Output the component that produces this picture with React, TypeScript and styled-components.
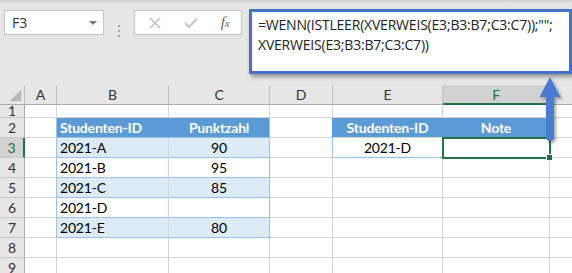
import React, { FunctionComponent } from "react";
import styled, { createGlobalStyle, css } from "styled-components";

const GlobalStyle = createGlobalStyle`
  html, body {
    margin: 0;
    padding: 0;
    background: #ffffff;
  }
`;

const GRID = "#d4d4d4";
const TABLE_LINE = "#9bc2e6";
const HEAD_BLUE = "#5b9bd5";
const BAND = "#ddebf7";
const GREEN = "#217346";
const CELL_FONT = `Lato, "Liberation Sans", sans-serif`;

type CellSpec = {
  text?: string;
  align?: "left" | "center";
  bg?: string;
  head?: boolean;
  right?: string;
  bottom?: string;
  selected?: boolean;
};

// G is only partly on screen, its letter lies past the window edge
const columns = ["A", "B", "C", "D", "E", "F", "G"];
const visibleLetters = ["A", "B", "C", "D", "E", "F"];
const rowNumbers = [1, 2, 3, 4, 5, 6, 7, 8, 9];

const students = [
  { id: "2021-A", score: "90" },
  { id: "2021-B", score: "95" },
  { id: "2021-C", score: "85" },
  { id: "2021-D", score: "" },
  { id: "2021-E", score: "80" }
];

// which cells carry content or table styling; every other cell is a plain grid cell
const buildCells = (): Record<string, CellSpec> => {
  const cells: Record<string, CellSpec> = {};
  cells.B2 = { text: "Studenten-ID", head: true, bg: HEAD_BLUE, right: HEAD_BLUE, bottom: TABLE_LINE };
  cells.C2 = { text: "Punktzahl", head: true, align: "center", bg: HEAD_BLUE, right: TABLE_LINE, bottom: TABLE_LINE };
  cells.A2 = { right: TABLE_LINE };
  students.forEach((s, i) => {
    const row = i + 3;
    const bg = i % 2 === 0 ? BAND : "#ffffff";
    cells[`A${row}`] = { right: TABLE_LINE };
    cells[`B${row}`] = { text: s.id, bg, right: "#c9dbee", bottom: TABLE_LINE };
    cells[`C${row}`] = { text: s.score, align: "center", bg, right: TABLE_LINE, bottom: TABLE_LINE };
  });
  cells.D2 = { right: HEAD_BLUE };
  cells.E2 = { text: "Studenten-ID", head: true, align: "center", bg: HEAD_BLUE, right: HEAD_BLUE };
  cells.F2 = { text: "Note", head: true, align: "center", bg: HEAD_BLUE, right: HEAD_BLUE };
  cells.D3 = { right: TABLE_LINE };
  cells.E3 = { text: "2021-D", align: "center", bottom: TABLE_LINE };
  cells.F3 = { selected: true };
  return cells;
};

const App: FunctionComponent = () => {
  const cells = buildCells();

  return (
    <Page>
      <GlobalStyle />
      <TopBar>
        <NameBox>
          <span>F3</span>
          <DropCaret />
        </NameBox>
        <Grip>
          <i />
          <i />
          <i />
        </Grip>
        <ButtonsBox>
          <ToolGlyph>
            <svg width="12" height="12" viewBox="0 0 12 12">
              <path d="M1 1 L11 11 M11 1 L1 11" stroke="#c4c4c4" strokeWidth="1.6" fill="none" />
            </svg>
          </ToolGlyph>
          <ToolGlyph>
            <svg width="14" height="12" viewBox="0 0 14 12">
              <path d="M1 6 L5 10 L13 1.5" stroke="#c4c4c4" strokeWidth="2" fill="none" />
            </svg>
          </ToolGlyph>
          <FxLabel>
            f<sub>x</sub>
          </FxLabel>
        </ButtonsBox>
        <FormulaBox>
          =WENN(ISTLEER(XVERWEIS(E3;B3:B7;C3:C7));"";
          <br />
          XVERWEIS(E3;B3:B7;C3:C7))
        </FormulaBox>
      </TopBar>

      <Sheet>
        <Corner />
        {columns.map((c) => (
          <ColHeader key={c} $active={c === "F"}>
            {visibleLetters.includes(c) ? c : null}
          </ColHeader>
        ))}
        {rowNumbers.map((r) => (
          <React.Fragment key={r}>
            <RowHeader $active={r === 3}>{r}</RowHeader>
            {columns.map((c) => {
              const spec = cells[`${c}${r}`] || {};
              return (
                <Cell
                  key={c}
                  $bg={spec.bg}
                  $head={spec.head}
                  $align={spec.align || "left"}
                  $right={spec.right}
                  $bottom={spec.bottom}
                  $selected={spec.selected}
                >
                  {spec.text}
                </Cell>
              );
            })}
          </React.Fragment>
        ))}
      </Sheet>

      <Arrow width="30" height="80" viewBox="0 0 30 80">
        <defs>
          <filter id="arrowShadow" x="-50%" y="-20%" width="200%" height="150%">
            <feDropShadow dx="2" dy="2" stdDeviation="1.5" floodColor="#000" floodOpacity="0.35" />
          </filter>
        </defs>
        <path
          d="M15 2 L25.5 22 L19 22 L19 62 Q19 66 15 66 Q11 66 11 62 L11 22 L4.5 22 Z"
          fill="#4a7bd0"
          filter="url(#arrowShadow)"
        />
      </Arrow>
    </Page>
  );
};

const Page = styled.div`
  position: relative;
  width: 572px;
  height: 273px;
  overflow: hidden;
  background: #ffffff;
`;

const TopBar = styled.div`
  height: 85px;
  box-sizing: border-box;
  display: flex;
  align-items: flex-start;
  padding: 9px 0 0 4px;
  background: linear-gradient(#cfcfcf 0px, #e6e6e6 4px, #e6e6e6 100%);
`;

const NameBox = styled.div`
  margin-top: 1px;
  width: 101px;
  height: 25px;
  box-sizing: border-box;
  border: 1px solid #c6c6c6;
  background: #ffffff;
  display: flex;
  align-items: center;
  justify-content: space-between;
  padding: 0 6px 0 7px;
  font-family: "Open Sans", "Liberation Sans", sans-serif;
  font-size: 14px;
  color: #333333;
`;

const DropCaret = styled.span`
  width: 0;
  height: 0;
  border-left: 4px solid transparent;
  border-right: 4px solid transparent;
  border-top: 4px solid #777777;
`;

const Grip = styled.div`
  width: 31px;
  margin-top: 16px;
  display: flex;
  flex-direction: column;
  align-items: center;
  gap: 3px;

  i {
    width: 2px;
    height: 2px;
    background: #a6a6a6;
  }
`;

const ButtonsBox = styled.div`
  margin-top: 1px;
  width: 109px;
  height: 25px;
  box-sizing: border-box;
  border: 1px solid #c6c6c6;
  background: #ffffff;
  display: grid;
  grid-template-columns: 36px 36px 1fr;
  align-items: center;
  justify-items: center;
  padding-left: 2px;
`;

const ToolGlyph = styled.span`
  display: flex;
  align-items: center;
`;

const FxLabel = styled.span`
  font-family: "Liberation Serif", serif;
  font-style: italic;
  font-size: 15px;
  color: #666666;
  sub {
    font-size: 11px;
    vertical-align: 0;
  }
`;

const FormulaBox = styled.div`
  margin-left: 7px;
  width: 323px;
  height: 65px;
  flex-shrink: 0;
  box-sizing: border-box;
  border: 3px solid #4472c4;
  background: #ffffff;
  box-shadow: 2px 3px 4px rgba(0, 0, 0, 0.35);
  padding: 3px 0 0 6px;
  font-family: "Open Sans", "Noto Sans", sans-serif;
  font-size: 14px;
  line-height: 20px;
  letter-spacing: -0.2px;
  color: #222222;
  white-space: nowrap;
`;

const Sheet = styled.div`
  display: grid;
  grid-template-columns: 25px 32px 112px 101px 63px 110px 107px 80px;
  grid-template-rows: 20px 13px repeat(8, 20px);
  font-family: ${CELL_FONT};
  font-size: 14px;
  letter-spacing: -0.2px;
`;

const Corner = styled.div`
  position: relative;
  background: #e6e6e6;
  border-right: 1px solid #c0c0c0;
  border-bottom: 1px solid #ababab;

  &::after {
    content: "";
    position: absolute;
    right: 3px;
    bottom: 3px;
    border-left: 11px solid transparent;
    border-bottom: 11px solid #b7b7b7;
  }
`;

const ColHeader = styled.div<{ $active?: boolean }>`
  display: flex;
  align-items: center;
  justify-content: center;
  box-sizing: border-box;
  background: ${(p) => (p.$active ? "#d2d2d2" : "#e6e6e6")};
  color: ${(p) => (p.$active ? GREEN : "#333333")};
  border-right: 1px solid #c0c0c0;
  border-bottom: ${(p) => (p.$active ? `2px solid ${GREEN}` : "1px solid #ababab")};
`;

const RowHeader = styled.div<{ $active?: boolean }>`
  display: flex;
  align-items: center;
  justify-content: center;
  overflow: hidden;
  box-sizing: border-box;
  line-height: 12px;
  background: ${(p) => (p.$active ? "#d2d2d2" : "#e6e6e6")};
  color: ${(p) => (p.$active ? GREEN : "#333333")};
  border-right: ${(p) => (p.$active ? `2px solid ${GREEN}` : "1px solid #ababab")};
  border-bottom: 1px solid #c8c8c8;
`;

type CellProps = {
  $bg?: string;
  $head?: boolean;
  $align: "left" | "center";
  $right?: string;
  $bottom?: string;
  $selected?: boolean;
};

const Cell = styled.div<CellProps>`
  position: relative;
  display: flex;
  align-items: center;
  justify-content: ${(p) => (p.$align === "center" ? "center" : "flex-start")};
  padding: 0 3px;
  overflow: hidden;
  white-space: nowrap;
  box-sizing: border-box;
  background: ${(p) => p.$bg || "#ffffff"};
  color: ${(p) => (p.$head ? "#ffffff" : "#000000")};
  font-weight: ${(p) => (p.$head ? 700 : 400)};
  border-right: 1px solid ${(p) => p.$right || GRID};
  border-bottom: 1px solid ${(p) => p.$bottom || GRID};

  ${(p) =>
    p.$selected &&
    css`
      overflow: visible;
      z-index: 2;
      outline: 2px solid ${GREEN};
      outline-offset: -1px;

      &::after {
        content: "";
        position: absolute;
        right: -4px;
        bottom: -4px;
        width: 5px;
        height: 5px;
        background: ${GREEN};
        border: 1px solid #ffffff;
      }
    `}
`;

const Arrow = styled.svg`
  position: absolute;
  left: 535px;
  top: 75px;
  z-index: 5;
  overflow: visible;
`;

export default App;
